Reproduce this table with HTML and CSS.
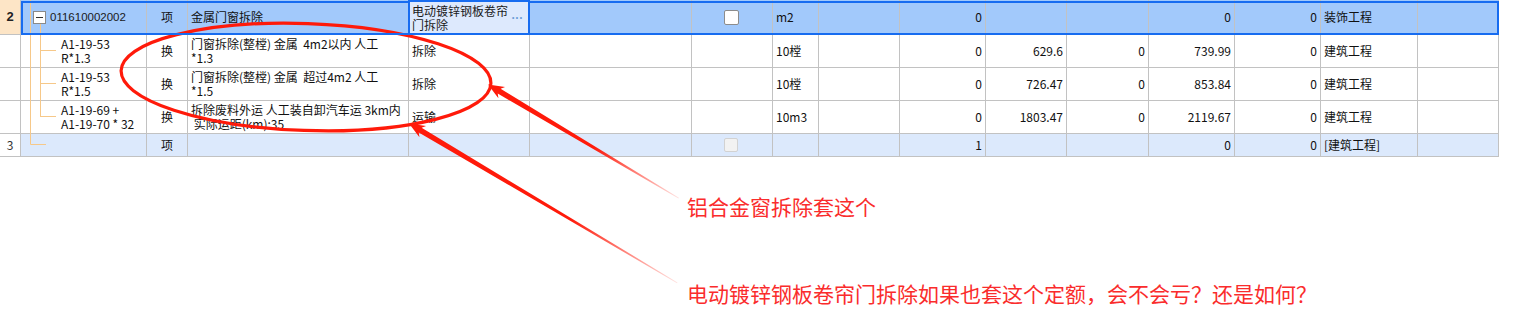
FILE: index.html
```html
<!DOCTYPE html>
<html lang="zh-CN">
<head>
<meta charset="utf-8">
<title>清单</title>
<link rel="stylesheet" href="styles.css">
</head>
<body>
<div class="page">
  <div class="sheet">
    <div class="row r-sel">
      <div class="c num num-sel">2</div>
      <div class="c code-top"><span class="toggle"></span><span class="code-main">011610002002</span></div>
      <div class="c ctr">项</div>
      <div class="c">金属门窗拆除</div>
      <div class="c feat"><span class="feat-text">电动镀锌钢板卷帘<br>门拆除</span><span class="more">...</span></div>
      <div class="c"></div>
      <div class="c ctr"><span class="chk"></span></div>
      <div class="c">m2</div>
      <div class="c"></div>
      <div class="c r">0</div>
      <div class="c r"></div>
      <div class="c r"></div>
      <div class="c r">0</div>
      <div class="c r">0</div>
      <div class="c">装饰工程</div>
      <div class="c"></div>
    </div>
    <div class="row">
      <div class="c num"></div>
      <div class="c code">A1-19-53<br>R*1.3</div>
      <div class="c ctr">换</div>
      <div class="c">门窗拆除(整樘) 金属&nbsp; 4m2以内 人工<br>*1.3</div>
      <div class="c">拆除</div>
      <div class="c"></div>
      <div class="c"></div>
      <div class="c">10樘</div>
      <div class="c"></div>
      <div class="c r">0</div>
      <div class="c r">629.6</div>
      <div class="c r">0</div>
      <div class="c r">739.99</div>
      <div class="c r">0</div>
      <div class="c">建筑工程</div>
      <div class="c"></div>
    </div>
    <div class="row">
      <div class="c num"></div>
      <div class="c code">A1-19-53<br>R*1.5</div>
      <div class="c ctr">换</div>
      <div class="c">门窗拆除(整樘) 金属&nbsp; 超过4m2 人工<br>*1.5</div>
      <div class="c">拆除</div>
      <div class="c"></div>
      <div class="c"></div>
      <div class="c">10樘</div>
      <div class="c"></div>
      <div class="c r">0</div>
      <div class="c r">726.47</div>
      <div class="c r">0</div>
      <div class="c r">853.84</div>
      <div class="c r">0</div>
      <div class="c">建筑工程</div>
      <div class="c"></div>
    </div>
    <div class="row">
      <div class="c num"></div>
      <div class="c code">A1-19-69 +<br>A1-19-70 * 32</div>
      <div class="c ctr">换</div>
      <div class="c">拆除废料外运 人工装自卸汽车运 3km内<br>&nbsp;实际运距(km):35</div>
      <div class="c">运输</div>
      <div class="c"></div>
      <div class="c"></div>
      <div class="c">10m3</div>
      <div class="c"></div>
      <div class="c r">0</div>
      <div class="c r">1803.47</div>
      <div class="c r">0</div>
      <div class="c r">2119.67</div>
      <div class="c r">0</div>
      <div class="c">建筑工程</div>
      <div class="c"></div>
    </div>
    <div class="row r-sum">
      <div class="c num">3</div>
      <div class="c"></div>
      <div class="c ctr">项</div>
      <div class="c"></div>
      <div class="c"></div>
      <div class="c"></div>
      <div class="c ctr"><span class="chk chk-off"></span></div>
      <div class="c"></div>
      <div class="c"></div>
      <div class="c r">1</div>
      <div class="c r"></div>
      <div class="c r"></div>
      <div class="c r">0</div>
      <div class="c r">0</div>
      <div class="c">[建筑工程]</div>
      <div class="c"></div>
    </div>
    <svg class="tree" width="60" height="157" viewBox="0 0 60 157">
      <g stroke="#f6c889" stroke-width="1" fill="none">
        <path d="M30.5 0 V144.5 H46"/>
        <path d="M40.5 24 V116.5"/>
        <path d="M40 50.5 H56"/>
        <path d="M40 83.5 H56"/>
        <path d="M40 116.5 H56"/>
      </g>
    </svg>
  </div>

  <div class="notes">
    <p class="note">铝合金窗拆除套这个</p>
    <p class="note note-2">电动镀锌钢板卷帘门拆除如果也套这个定额，会不会亏？还是如何？</p>
  </div>

  <svg class="marks" width="1521" height="318" viewBox="0 0 1521 318">
    <defs>
      <linearGradient id="fade1" gradientUnits="userSpaceOnUse" x1="0" y1="0" x2="222" y2="0">
        <stop offset="0" stop-color="#ff1a0a"/>
        <stop offset="0.55" stop-color="#ff1a0a"/>
        <stop offset="1" stop-color="#ff1a0a" stop-opacity="0.12"/>
      </linearGradient>
      <linearGradient id="fade2" gradientUnits="userSpaceOnUse" x1="0" y1="0" x2="312" y2="0">
        <stop offset="0" stop-color="#ff1a0a"/>
        <stop offset="0.6" stop-color="#ff1a0a"/>
        <stop offset="1" stop-color="#ff1a0a" stop-opacity="0.12"/>
      </linearGradient>
    </defs>
    <ellipse cx="306" cy="77" rx="185" ry="53.5" transform="rotate(2 306 77)" fill="none" stroke="#ff1a0a" stroke-width="3.2"/>
    <polygon transform="translate(488 84.5) rotate(30.8)" fill="url(#fade1)" points="0,0 16,-6.5 13,-2.8 222,-0.4 222,0.4 13,2.8 16,6.5"/>
    <polygon transform="translate(409 123.5) rotate(30.7)" fill="url(#fade2)" points="0,0 16,-6.5 13,-2.8 312,-0.4 312,0.4 13,2.8 16,6.5"/>
  </svg>
</div>
</body>
</html>
```

FILE: styles.css
```css
html, body {
  margin: 0;
  padding: 0;
  background: #ffffff;
}

.page {
  position: relative;
  width: 1521px;
  height: 318px;
  overflow: hidden;
  font-family: "Noto Sans CJK SC", "Liberation Sans", sans-serif;
  color: #111;
}

.sheet {
  position: relative;
  width: 1499px;
}

.row {
  display: grid;
  grid-template-columns: 21px 126px 41px 221px 121px 162px 81px 46px 81px 86px 81px 82px 86px 86px 97px 81px;
  height: 33px;
}

.row:first-child {
  height: 35px;
}

.r-sum {
  height: 23px;
}

.c {
  box-sizing: border-box;
  border-right: 1px solid #c2c2c2;
  border-bottom: 1px solid #c2c2c2;
  display: flex;
  align-items: center;
  padding: 0 3px;
  font-size: 12px;
  line-height: 14px;
  white-space: nowrap;
  overflow: hidden;
  min-width: 0;
}

.r {
  justify-content: flex-end;
}

.ctr {
  justify-content: center;
}

.num {
  justify-content: center;
  padding: 0;
  color: #222;
}

.num-sel {
  font-weight: 700;
  font-family: "Liberation Sans", sans-serif;
  font-size: 13px;
}

/* selected row */
.r-sel {
  position: relative;
}

.r-sel .c {
  background: #a2c9fb;
}

.r-sel .num-sel {
  background: #fde5c6;
}

.r-sel::after {
  content: "";
  position: absolute;
  grid-column: 2 / -1;
  grid-row: 1;
  top: 1px;
  left: 0;
  right: 0;
  bottom: 0;
  border: 2px solid #176cf0;
  pointer-events: none;
  z-index: 3;
}

.r-sel .feat {
  background: #dde9fd;
  border: 2px solid #176cf0;
  margin-left: -1px;
  justify-content: space-between;
  align-items: center;
  padding: 0 5px 0 2px;
  position: relative;
  z-index: 4;
}

.feat-text {
  display: block;
  color: #1a1a1a;
}

.more {
  color: #6e9fd8;
  font-family: "Liberation Sans", sans-serif;
  font-size: 12px;
  line-height: 8px;
  font-weight: 700;
  letter-spacing: 0.5px;
  margin-top: -5px;
}

.code-top {
  padding-left: 12px;
  gap: 4px;
}

.toggle {
  box-sizing: border-box;
  width: 13px;
  height: 13px;
  border: 1px solid #8a8a8a;
  background: #ffffff;
  display: flex;
  align-items: center;
  justify-content: center;
  flex: none;
}

.toggle::before {
  content: "";
  width: 7px;
  height: 1px;
  background: #333;
}

.code-main {
  font-family: "Liberation Sans", sans-serif;
  font-size: 11.5px;
  color: #1a1a1a;
}

.code {
  padding-left: 40px;
  font-size: 12px;
}

.chk {
  box-sizing: border-box;
  width: 15px;
  height: 15px;
  border: 1px solid #8c8c8c;
  border-radius: 2px;
  background: #ffffff;
  margin-right: 2px;
}

.chk-off {
  background: #f2f2f2;
  border-color: #d2d2d2;
  width: 14px;
  height: 14px;
}

.r-sum .c {
  background: #dce9fc;
}

.r-sum .num {
  background: #ffffff;
  color: #333;
}

.tree {
  position: absolute;
  top: 0;
  left: 0;
  pointer-events: none;
}

/* annotations */
.notes {
  padding-left: 687px;
  padding-top: 37px;
}

.note {
  margin: 0;
  font-size: 21px;
  line-height: 24px;
  color: #fa2c2c;
  white-space: nowrap;
}

.note-2 {
  margin-top: 63px;
}

.marks {
  position: absolute;
  top: 0;
  left: 0;
  pointer-events: none;
}
```
